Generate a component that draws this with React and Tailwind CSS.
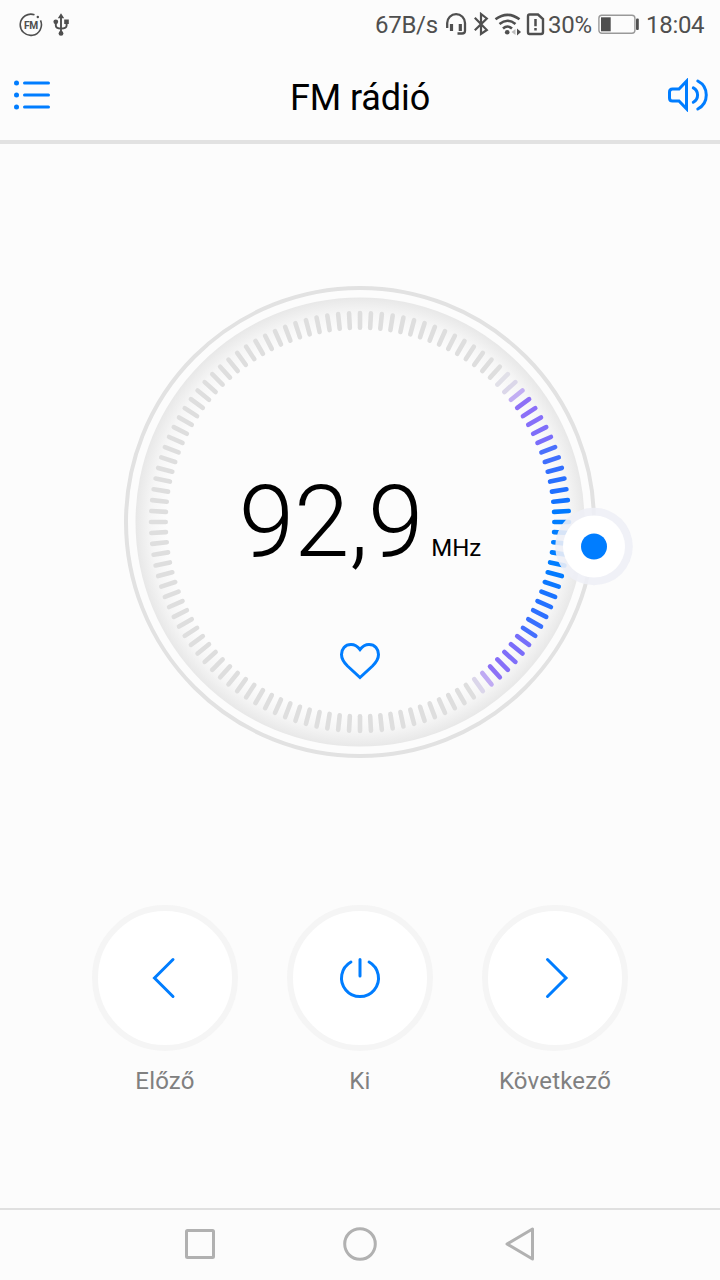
const BLUE = "#007dff";
const CENTER = 236;

const TICK_COLORS = {
  "-45": "#e1e0e8", "-42": "#dbd7e9", "-39": "#c2aef3", "-36": "#8d70f6", "-33": "#8b6ff8",
  "-30": "#866ff9", "-27": "#7f6ef9", "-24": "#7a6dfa", "-21": "#4a70fc", "-18": "#406ffd",
  "-15": "#326ffe", "-12": "#276ffe", "-9": "#1f6fff", "-6": "#1072ff", "-3": "#007aff",
  "0": "#007dff", "3": "#007dff", "6": "#007dff", "9": "#007dff", "12": "#007dff",
  "15": "#037bff", "18": "#0c78ff", "21": "#1973ff", "24": "#2471ff", "27": "#2d70ff",
  "30": "#3870fe", "33": "#446ffd", "36": "#766efa", "39": "#7a6dfa", "42": "#7f6ef9",
  "45": "#866ff8", "48": "#8c70f6", "51": "#bfaaf3", "54": "#dbd6ea",
};

const TICKS = Array.from({ length: 120 }, (_, i) => {
  const angle = i * 3 - 180;
  return { angle, color: TICK_COLORS[angle] ?? "#dedede" };
});

function StatusBar() {
  return (
    <div className="flex h-[50px] shrink-0 items-center justify-between pl-[19px] pr-[15px] text-2xl leading-none tracking-[-0.3px] text-[#4f4f4f]">
      <svg width="52" height="26" viewBox="0 0 52 26" fill="none" stroke="#4f4f4f">
        <path d="M15.5 2.8 A10.6 10.6 0 1 0 21.5 8.4" strokeWidth="1.6" />
        <circle cx="18.8" cy="5" r="1.2" fill="#4f4f4f" stroke="none" />
        <text x="12" y="16.7" textAnchor="middle" fontSize="10.2" letterSpacing="-0.2" fontWeight="700" fill="#4f4f4f" stroke="none">FM</text>
        <path d="M42 4v19M36.8 10v3.5q0 3 5.2 3q5.6 0 5.6-3V10" strokeWidth="1.9" />
        <path d="M42 1.200l3.200 5h-6.400zM45.200 7.600h4.600v4.400h-4.600z" fill="#4f4f4f" stroke="none" />
        <circle cx="36.8" cy="9.8" r="2.4" fill="#4f4f4f" stroke="none" />
        <circle cx="42" cy="21.400" r="2.400" fill="#4f4f4f" stroke="none" />
      </svg>
      <div className="flex items-center">
        <span className="w-[70px]">67B/s</span>
        <svg width="103" height="26" viewBox="445 12 103 26" fill="none" stroke="#4f4f4f" strokeWidth="2.300">
          <path d="M447.200 28v-5a8.900 8.900 0 0 1 17.800 0v8q0 2.500-3 2.500h-4.500" />
          <path d="M451.500 24v7M460.300 24v7" strokeWidth="3.200" />
          <path d="M474.800 17.800l12 12.200-5.800 4v-20l5.800 4.500-12 11.800" strokeWidth="2.200" />
          <path d="M495.500 19.300q12-9 24 0M499.500 24q8-6.500 16 0M503 28.500q4.500-4 9 0" strokeWidth="2.600" />
          <circle cx="507.200" cy="32.300" r="2.300" fill="#4f4f4f" stroke="none" />
          <path d="M515.500 29v6l-4-3z" fill="#bbb" stroke="none" />
          <path d="M517 28.500v7l4-3.500z" fill="#4f4f4f" stroke="none" />
          <path d="M529.500 14.500h8.500l5 4.500v13q0 2-2 2h-11.500q-1.500 0-1.500-2v-15.500q0-2 1.500-2z" strokeWidth="2.400" />
          <path d="M535.500 19v7.200M535.500 28v2.500" strokeWidth="2.500" />
        </svg>
        <span className="w-[50px]">30%</span>
        <svg width="42" height="22" viewBox="0 0 42 22" fill="none">
          <rect x="0.900" y="1.300" width="36" height="18" rx="3" stroke="#999" strokeWidth="1.400" />
          <rect x="3" y="3.300" width="9.700" height="14" fill="#4f4f4f" />
          <rect x="38" y="4.500" width="2.800" height="11.500" rx="1" fill="#4f4f4f" />
        </svg>
        <span className="ml-[6px] w-[59px]">18:04</span>
      </div>
    </div>
  );
}

function Header() {
  return (
    <header className="flex h-[94px] shrink-0 items-center justify-between border-b-4 border-[#e2e2e2] pl-[13px] pr-[11px]">
      <svg width="40" height="34" viewBox="0 0 40 34" stroke={BLUE} strokeWidth="3" strokeLinecap="round">
        {[5, 17, 29].map((y) => (
          <g key={y}>
            <circle cx="3.500" cy={y} r="2.500" fill={BLUE} stroke="none" />
            <path d={`M11.500 ${y}h24`} />
          </g>
        ))}
      </svg>
      <h1 className="pt-[6px] text-4xl leading-none tracking-[-0.1px] text-black">FM rádió</h1>
      <svg width="42" height="34" viewBox="0 0 42 34" fill="none" stroke={BLUE} strokeWidth="3" strokeLinecap="round">
        <path d="M19.500 3.200v27.600L12 23H5.500Q2.500 23 2.500 20V14Q2.500 11 5.500 11H12z" />
        <path d="M26.300 9.900A8.200 8.200 0 0 1 26.300 24.300M30.800 3A15.800 15.800 0 0 1 30.800 31" />
      </svg>
    </header>
  );
}

function Dial() {
  return (
    <div className="relative flex size-[472px] flex-col items-center">
      <svg className="absolute inset-0 overflow-visible" width="472" height="472" viewBox="0 0 472 472">
        <defs>
          <radialGradient id="rim">
            <stop offset="0.860" stopColor="#fcfcfc" />
            <stop offset="0.930" stopColor="#f6f6f6" />
            <stop offset="1" stopColor="#e8e8e8" />
          </radialGradient>
        </defs>
        <circle cx={CENTER} cy={CENTER} r="234" fill="none" stroke="#e2e2e2" strokeWidth="4" />
        <circle cx={CENTER} cy={CENTER} r="224.500" fill="url(#rim)" />
        {TICKS.map(({ angle, color }) => (
          <path
            key={angle}
            d="M430.300 236h14.700"
            stroke={color}
            strokeWidth="4.600"
            strokeLinecap="round"
            transform={`rotate(${angle} 236 236)`}
          />
        ))}
        <circle cx="470" cy="260.500" r="38.800" fill="#eef0f6" fillOpacity="0.900" />
        <circle cx="470" cy="260.500" r="31" fill="#fff" />
        <circle cx="470" cy="260.500" r="13" fill={BLUE} />
      </svg>
      <div className="relative mt-[176px] flex items-baseline text-black">
        <span className="text-[100px] font-light leading-[120px] tracking-[-0.3px]">92,9</span>
        <span className="ml-[8px] text-2xl">MHz</span>
      </div>
      <svg className="relative mt-[59px]" width="42" height="40" viewBox="0 0 42 40" fill="none" stroke={BLUE} strokeWidth="3" strokeLinejoin="miter">
        <path d="M21 8.500C18 4.500 15 3.500 12 3.500C6 3.500 2.500 8 2.500 13.500C2.500 18 5 21.500 8.500 25L21 36.500L33.500 25C37 21.500 39.500 18 39.500 13.500C39.500 8 36 3.500 30 3.500C27 3.500 24 4.500 21 8.500Z" />
      </svg>
    </div>
  );
}

function Control({ label, path }) {
  return (
    <div className="flex w-[195px] flex-col items-center">
      <button className="flex size-[146px] items-center justify-center rounded-full border-[6px] border-[#f5f5f5] bg-white">
        <svg width="44" height="44" viewBox="0 0 44 44" fill="none" stroke={BLUE} strokeWidth="3" strokeLinecap="round">
          <path d={path} />
        </svg>
      </button>
      <span className="mt-[14px] text-2xl tracking-[0.2px] text-[#808080]">{label}</span>
    </div>
  );
}

function NavBar() {
  return (
    <nav className="flex h-[72px] shrink-0 items-center justify-center gap-[120px] border-t-2 border-[#e0e0e0] pb-[2px]">
      <svg width="40" height="40" fill="none" stroke="#b1b1b1" strokeWidth="3">
        <rect x="6.500" y="6.500" width="27" height="27" rx="1" />
      </svg>
      <svg width="40" height="40" fill="none" stroke="#b1b1b1" strokeWidth="3">
        <circle cx="20" cy="20" r="15.300" />
      </svg>
      <svg width="40" height="40" fill="none" stroke="#b1b1b1" strokeWidth="3" strokeLinejoin="round">
        <path d="M7 20L32.500 5v30z" />
      </svg>
    </nav>
  );
}

export default function App() {
  return (
    <div className="flex h-[1280px] w-[720px] flex-col overflow-hidden bg-[#fcfcfc] font-['Roboto',sans-serif]">
      <StatusBar />
      <Header />
      <main className="flex flex-1 flex-col items-center pt-[142px]">
        <Dial />
        <div className="mt-[147px] flex">
          <Control label="Előző" path="M30 3.500L11.500 22L30 40.500" />
          <Control label="Ki" path="M22 3.500V20M12.900 6A18.500 18.500 0 1 0 31.100 6" />
          <Control label="Következő" path="M14.500 3.500L33 22L14.500 40.500" />
        </div>
      </main>
      <NavBar />
    </div>
  );
}
